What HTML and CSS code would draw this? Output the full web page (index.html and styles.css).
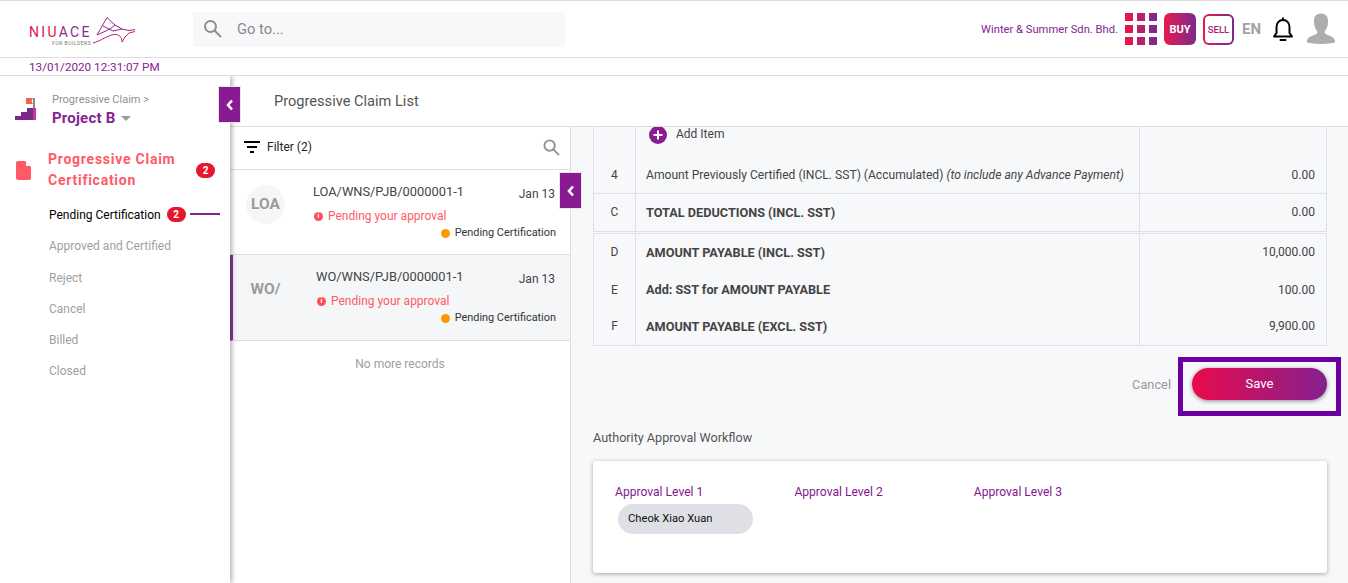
FILE: index.html
```html
<!DOCTYPE html>
<html lang="en">
<head>
<meta charset="UTF-8">
<title>Progressive Claim List</title>
<link rel="stylesheet" href="styles.css">
</head>
<body>
<header class="topbar">
    <div class="logo">
        <svg width="46" height="30" viewBox="92 16 46 30" fill="none">
            <path d="M97 35 L107 17.500 L115 25 L122 29 L129 30.500 L135 29.500 M97 35 L110 29 L115 25 M103 26 L109 29 L113 31 L122 29" stroke="#8d2a8b" stroke-width="1"/>
            <path d="M93 43 C101 41 108 35 114 34.500 C119 34 122 37 122 42 L125 37 L129 33 L135 31.500" stroke="#c81f63" stroke-width="1"/>
        </svg>
        <span class="logo-text"><span class="logo-red">NIU</span>ACE</span>
        <span class="logo-sub">FOR BUILDERS</span>
    </div>
    <div class="goto">
        <svg class="search-icon" width="20" height="20" viewBox="0 0 20 20" fill="none" stroke="#8f8f8f" stroke-width="2">
            <circle cx="7.5" cy="7.5" r="5.5"/>
            <path d="M11.5 11.5 L17.5 17.5" stroke-linecap="round"/>
        </svg>
        <span>Go to...</span>
    </div>
    <div class="top-right">
        <span class="company">Winter &amp; Summer Sdn. Bhd.</span>
        <div class="apps">
            <i class="a1"></i><i class="a2"></i><i class="a3"></i>
            <i class="a1"></i><i class="a2"></i><i class="a3"></i>
            <i class="a1"></i><i class="a2"></i><i class="a3"></i>
        </div>
        <span class="buy">BUY</span>
        <span class="sell"><span>SELL</span></span>
        <span class="lang">EN</span>
        <svg class="bell" width="22" height="25" viewBox="0 0 22 25" fill="none" stroke="#000" stroke-width="2">
            <path d="M2 19.500 H20 L17.500 16 V10.500 C17.500 6 15 3 11 3 C7 3 4.500 6 4.500 10.500 V16 Z" stroke-linejoin="round"/>
            <path d="M11 0.500 V3"/>
            <path d="M8.500 23 H13.500" stroke-linecap="round"/>
        </svg>
        <svg class="avatar" width="28" height="32" viewBox="0 0 30 33">
            <path d="M15 0 C20.500 0 23 4 22.500 9 C22.500 14 20.500 17 19 19 V21 C23 24 29 24 30 29 V31 C24 33 6 33 0 31 V29 C1 24 7 24 11 21 V19 C9.500 17 7.500 14 7.500 9 C7 4 9.500 0 15 0 Z" fill="#adadad"/>
        </svg>
    </div>
</header>
<div class="datebar">13/01/2020 12:31:07 PM</div>

<div class="main">
    <aside class="sidebar">
        <div class="project">
            <svg class="stairs" width="22" height="23" viewBox="0 0 22 23">
                <path d="M11 0 H18 L16.500 3 L18 6 H11 Z" fill="#f0644a"/>
                <rect x="18" y="0" width="2" height="10" fill="#8a8a8a"/>
                <path d="M0 22 V18 H6 V14 H12 V10 H18 V22 Z" fill="#7b2a87"/>
                <rect x="18" y="10" width="3" height="12" fill="#c2379a"/>
            </svg>
            <div>
                <div class="crumb">Progressive Claim &gt;</div>
                <div class="project-name">Project B <i class="caret"></i></div>
            </div>
        </div>
        <div class="menu-head">
            <svg width="15" height="19" viewBox="0 0 15 19">
                <path d="M2 0 H9 L15 6 V17 A2 2 0 0 1 13 19 H2 A2 2 0 0 1 0 17 V2 A2 2 0 0 1 2 0 Z" fill="#ff5a67"/>
                <path d="M10 1 L14 5 H10 Z" fill="#fff"/>
            </svg>
            <div class="menu-title">Progressive Claim Certification</div>
            <span class="badge">2</span>
        </div>
        <ul class="submenu">
            <li class="active">Pending Certification <span class="badge">2</span><i class="dash"></i></li>
            <li>Approved and Certified</li>
            <li>Reject</li>
            <li>Cancel</li>
            <li>Billed</li>
            <li>Closed</li>
        </ul>
        <button class="toggle toggle-side"><svg width="8" height="12" viewBox="0 0 8 12"><path d="M6 1.500 L2 6 L6 10.500" fill="none" stroke="#fff" stroke-width="2.600"/></svg></button>
    </aside>

    <div class="content">
        <div class="title-bar">Progressive Claim List</div>
        <div class="panes">
            <section class="list">
                <div class="filter">
                    <svg width="16" height="12" viewBox="0 0 16 12" fill="#000">
                        <rect x="0" y="0" width="16" height="2"/>
                        <rect x="3" y="5" width="10" height="2"/>
                        <rect x="6" y="10" width="4" height="2"/>
                    </svg>
                    <span>Filter (2)</span>
                    <svg class="filter-search" width="17" height="17" viewBox="0 0 18 18" fill="none" stroke="#929292" stroke-width="2">
                        <circle cx="7" cy="7" r="5.500"/>
                        <path d="M11 11 L16.500 16.500" stroke-linecap="round"/>
                    </svg>
                </div>
                <article class="claim">
                    <div class="claim-avatar circle">LOA</div>
                    <div class="claim-body">
                        <div class="claim-top"><span class="claim-no">LOA/WNS/PJB/0000001-1</span><span class="claim-date">Jan 13</span></div>
                        <div class="claim-alert"><i class="info">i</i>Pending your approval</div>
                    </div>
                    <div class="claim-status"><i class="dot"></i>Pending Certification</div>
                </article>
                <article class="claim selected">
                    <div class="claim-avatar">WO/</div>
                    <div class="claim-body">
                        <div class="claim-top"><span class="claim-no">WO/WNS/PJB/0000001-1</span><span class="claim-date">Jan 13</span></div>
                        <div class="claim-alert"><i class="info">i</i>Pending your approval</div>
                    </div>
                    <div class="claim-status"><i class="dot"></i>Pending Certification</div>
                </article>
                <div class="no-more">No more records</div>
                <button class="toggle toggle-list"><svg width="8" height="12" viewBox="0 0 8 12"><path d="M6 1.500 L2 6 L6 10.500" fill="none" stroke="#fff" stroke-width="2.600"/></svg></button>
            </section>

            <section class="detail">
                <table class="summary">
                    <colgroup><col class="c1"><col class="c2"><col class="c3"></colgroup>
                    <tr class="row-add">
                        <td></td>
                        <td>
                            <div class="add-item">
                                <svg width="18" height="18" viewBox="0 0 18 18">
                                    <circle cx="9" cy="9" r="9" fill="#8a1c92"/>
                                    <path d="M9 4.500 V13.500 M4.500 9 H13.500" stroke="#fff" stroke-width="2"/>
                                </svg>
                                <span>Add Item</span>
                            </div>
                            <div class="accum">Amount Previously Certified (INCL. SST) (Accumulated) <em>(to include any Advance Payment)</em></div>
                        </td>
                        <td class="num"><span class="accum-num">0.00</span></td>
                    </tr>
                    <tr class="row-c">
                        <td class="letter">C</td>
                        <td><b>TOTAL DEDUCTIONS (INCL. SST)</b></td>
                        <td class="num">0.00</td>
                    </tr>
                    <tr class="row-p row-d">
                        <td class="letter">D</td>
                        <td><b>AMOUNT PAYABLE (INCL. SST)</b></td>
                        <td class="num">10,000.00</td>
                    </tr>
                    <tr class="row-p">
                        <td class="letter">E</td>
                        <td><b>Add: SST for AMOUNT PAYABLE</b></td>
                        <td class="num">100.00</td>
                    </tr>
                    <tr class="row-p">
                        <td class="letter">F</td>
                        <td><b>AMOUNT PAYABLE (EXCL. SST)</b></td>
                        <td class="num">9,900.00</td>
                    </tr>
                </table>
                <span class="row-four">4</span>

                <div class="actions">
                    <span class="cancel">Cancel</span>
                    <div class="save-box"><button class="save">Save</button></div>
                </div>

                <h2 class="wf-title">Authority Approval Workflow</h2>
                <div class="wf-card">
                    <div class="wf-level">
                        <div class="wf-label">Approval Level 1</div>
                        <div class="chip">Cheok Xiao Xuan</div>
                    </div>
                    <div class="wf-level"><div class="wf-label">Approval Level 2</div></div>
                    <div class="wf-level"><div class="wf-label">Approval Level 3</div></div>
                </div>
            </section>
        </div>
    </div>
</div>
</body>
</html>
```

FILE: styles.css
```css
* {
    box-sizing: border-box;
}
html, body {
    margin: 0;
    height: 583px;
    overflow: hidden;
}
body {
    background: #fff;
    font-family: Roboto, "Liberation Sans", sans-serif;
    font-size: 12px;
    color: #444;
}
i {
    font-style: normal;
}

/* top */
.topbar {
    height: 58px;
    border-top: 1px solid #ddd;
    border-bottom: 1px solid #ddd;
    display: flex;
    align-items: center;
}
.logo {
    position: relative;
    width: 193px;
    height: 56px;
    flex: none;
}
.logo svg {
    position: absolute;
    left: 92px;
    top: 15px;
}
.logo-text {
    position: absolute;
    left: 29px;
    top: 25px;
    font-size: 14px;
    line-height: 12px;
    letter-spacing: 2.300px;
    color: #8d2a8b;
}
.logo-red {
    color: #e0144f;
}
.logo-sub {
    position: absolute;
    left: 52px;
    top: 40px;
    font-size: 5px;
    line-height: 5px;
    letter-spacing: 0.5px;
    color: #777;
}
.goto {
    width: 372px;
    height: 35px;
    background: #f7f8fa;
    display: flex;
    align-items: center;
    padding-left: 10px;
    gap: 14px;
    font-size: 14.700px;
    color: #8a8a8a;
}
.top-right {
    margin-left: auto;
    display: flex;
    align-items: center;
    padding-right: 13px;
}
.company {
    font-size: 11.200px;
    color: #84248f;
    margin-right: 7px;
}
.apps {
    display: grid;
    grid-template-columns: repeat(3, 8px);
    grid-auto-rows: 8px;
    gap: 4px;
    margin-right: 7px;
}
.apps .a1 { background: #e5164d; }
.apps .a2 { background: #b82068; }
.apps .a3 { background: #84288a; }
.buy {
    width: 32px;
    height: 32px;
    border-radius: 6px;
    background: linear-gradient(90deg, #e91a4c, #7b2a8c);
    color: #fff;
    font-size: 11px;
    font-weight: 700;
    display: flex;
    align-items: center;
    justify-content: center;
    margin-right: 7px;
}
.sell {
    width: 31px;
    height: 31px;
    border-radius: 6px;
    padding: 2px;
    background: linear-gradient(90deg, #e91a4c, #7b2a8c);
    margin-right: 8px;
}
.sell span {
    display: flex;
    width: 100%;
    height: 100%;
    border-radius: 4px;
    background: #fff;
    color: #a8246f;
    font-size: 9.500px;
    font-weight: 500;
    align-items: center;
    justify-content: center;
}
.lang {
    font-size: 15px;
    font-weight: 700;
    color: #a3a3a3;
    margin-right: 11px;
}
.bell {
    margin-right: 13px;
}
.datebar {
    height: 18px;
    border-bottom: 1px solid #ddd;
    padding-left: 29px;
    font-size: 11.700px;
    line-height: 19px;
    color: #84248f;
}

/* layout */
.main {
    display: flex;
    height: 507px;
    overflow: hidden;
}
.sidebar {
    position: relative;
    width: 230px;
    flex: none;
    background: #fff;
    box-shadow: 2px 0 5px rgba(0, 0, 0, 0.3);
    z-index: 2;
}
.content {
    flex: 1;
    min-width: 0;
}
.title-bar {
    height: 51px;
    border-bottom: 1px solid #ddd;
    padding: 16px 0 0 44px;
    font-size: 14.600px;
    color: #555;
}
.panes {
    display: flex;
    height: 456px;
}

/* sidebar */
.project {
    display: flex;
    gap: 15px;
    padding: 17px 0 0 15px;
    height: 73px;
}
.stairs {
    margin-top: 5px;
}
.crumb {
    font-size: 11px;
    line-height: 14px;
    color: #8f8f8f;
}
.project-name {
    font-size: 15px;
    font-weight: 700;
    line-height: 20px;
    margin-top: 1px;
    letter-spacing: 0.2px;
    color: #84248f;
    display: flex;
    align-items: center;
    gap: 6px;
}
.caret {
    width: 0;
    height: 0;
    border: 5px solid transparent;
    border-top: 5px solid #9a9a9a;
    border-bottom: 0;
}
.menu-head {
    display: flex;
    align-items: center;
    padding-left: 16px;
    height: 42px;
}
.menu-title {
    width: 132px;
    margin-left: 17px;
    font-size: 14px;
    font-weight: 700;
    line-height: 21px;
    letter-spacing: 0.750px;
    color: #ff5a67;
}
.badge {
    display: inline-block;
    width: 19px;
    height: 15px;
    border-radius: 8px;
    background: #e5162d;
    color: #fff;
    font-size: 10px;
    font-weight: 700;
    line-height: 15px;
    text-align: center;
}
.menu-head .badge {
    margin-left: 16px;
}
.submenu {
    list-style: none;
    margin: 16px 0 0;
    padding: 0 0 0 49px;
}
.submenu li {
    height: 31.300px;
    line-height: 16px;
    font-size: 12px;
    color: #a0a0a0;
}
.submenu li.active {
    color: #000;
    display: flex;
    align-items: flex-start;
    gap: 6px;
}
.dash {
    width: 30px;
    height: 2px;
    background: #84248f;
    margin: 6px 0 0 -2px;
}
.toggle {
    position: absolute;
    width: 21px;
    height: 35px;
    padding: 0;
    border: 0;
    background: #881a92;
    display: flex;
    align-items: center;
    justify-content: center;
}
.toggle-side {
    left: 219px;
    top: 11px;
    outline: 1px solid #e6e6e6;
}
.toggle-list {
    left: 330px;
    top: 46px;
    outline: 1px solid #e6e6e6;
    z-index: 2;
}

/* list */
.list {
    position: relative;
    width: 341px;
    flex: none;
    background: #fff;
    border-right: 1px solid #ddd;
}
.filter {
    height: 43px;
    display: flex;
    align-items: center;
    gap: 7px;
    padding: 0 10px 2px 14px;
    font-size: 12px;
    color: #222;
    border-bottom: 1px solid #ddd;
}
.filter-search {
    margin-left: auto;
}
.claim {
    position: relative;
    height: 85px;
    border-bottom: 1px solid #ddd;
    display: flex;
    padding-left: 16px;
}
.claim.selected {
    height: 86px;
    background: #f5f6f8;
    border-left: 3px solid #8f3a98;
    padding-left: 13px;
}
.claim-avatar {
    width: 39px;
    height: 39px;
    margin-top: 15px;
    font-size: 15.500px;
    font-weight: 700;
    line-height: 39px;
    text-align: center;
    color: #9b9b9b;
    flex: none;
}
.claim-avatar.circle {
    background: #f5f6f8;
    border-radius: 50%;
}
.claim-body {
    flex: 1;
    padding: 14px 15px 0 28px;
    min-width: 0;
}
.selected .claim-body {
    padding-left: 31px;
}
.claim-top {
    display: flex;
    justify-content: space-between;
    font-size: 12px;
    color: #444;
}
.claim-no {
    font-size: 12.850px;
    line-height: 16px;
}
.claim-date {
    line-height: 16px;
    margin-top: 2px;
}
.claim-alert {
    margin-top: 6px;
    display: flex;
    align-items: center;
    gap: 5px;
    font-size: 12px;
    line-height: 16px;
    color: #ff5a67;
}
.info {
    width: 9px;
    height: 9px;
    margin-left: 1px;
    border-radius: 50%;
    background: #ff4d5c;
    color: #fff;
    font-size: 7px;
    font-weight: 700;
    line-height: 9px;
    text-align: center;
}
.claim-status {
    position: absolute;
    right: 14px;
    bottom: 14px;
    display: flex;
    align-items: center;
    gap: 5px;
    font-size: 10.900px;
    line-height: 14px;
    color: #333;
}
.selected .claim-status {
    bottom: 15px;
}
.no-more {
    margin-top: 15px;
    text-align: center;
    font-size: 12px;
    line-height: 16px;
    color: #a0a0a0;
}
.dot {
    width: 9px;
    height: 9px;
    border-radius: 50%;
    background: #ff9800;
}

/* detail */
.detail {
    position: relative;
    flex: 1;
    min-width: 0;
    background: #f7f8fa;
    padding: 0 21px 0 22px;
    overflow: hidden;
}
.summary {
    width: 734px;
    border-collapse: collapse;
    table-layout: fixed;
    font-size: 12px;
    color: #444;
    border-left: 1px solid #dfe1e6;
    border-right: 1px solid #dfe1e6;
    border-bottom: 1px solid #dfe1e6;
}
.c1 { width: 42px; }
.c3 { width: 187px; }
.summary td {
    padding: 0 11px 0 10px;
    border-right: 1px solid #dfe1e6;
}
.summary b {
    font-size: 12.700px;
    font-weight: 700;
    color: #444;
}
.summary td.letter {
    padding: 0;
    text-align: center;
}
.num {
    text-align: right;
    font-size: 12px;
}
.row-add td {
    height: 66px;
    vertical-align: top;
    border-bottom: 1px solid #dfe1e6;
}
.add-item {
    display: flex;
    gap: 9px;
    padding-left: 3px;
    height: 40px;
    line-height: 14px;
    align-items: flex-start;
}
.add-item svg {
    margin-top: -1px;
}
.add-item span {
    color: #444;
}
.accum {
    font-size: 12.100px;
    line-height: 16px;
    white-space: nowrap;
}
.accum-num {
    display: block;
    margin-top: 40px;
    line-height: 16px;
}
.row-four {
    position: absolute;
    left: 40px;
    top: 40px;
    font-size: 12px;
    line-height: 16px;
}
.row-c td {
    height: 39px;
}
.row-p td {
    height: 37px;
}
.row-d td {
    height: 39px;
    border-top: 3px double #dfe1e6;
}
.actions {
    display: flex;
    justify-content: flex-end;
    align-items: center;
    margin-top: 11px;
    width: 748px;
    gap: 7px;
}
.cancel {
    font-size: 12.800px;
    color: #999;
    margin-bottom: 3px;
}
.save-box {
    border: 5px solid #6a00a3;
    padding: 6px 9px;
    width: 163px;
    height: 59px;
}
.save {
    display: block;
    width: 135px;
    height: 32px;
    border: 0;
    border-radius: 16px;
    background: linear-gradient(90deg, #ea0a4c, #84208f);
    box-shadow: 0 1px 4px rgba(0, 0, 0, 0.45);
    color: #fff;
    font-family: Roboto, "Liberation Sans", sans-serif;
    font-size: 13px;
    font-weight: 400;
    padding: 0;
}
.wf-title {
    margin: 14px 0 0;
    font-size: 12.600px;
    font-weight: 400;
    line-height: 16px;
    color: #555;
}
.wf-card {
    margin-top: 15px;
    width: 734px;
    height: 112px;
    background: #fff;
    border-radius: 3px;
    box-shadow: 0 1px 4px rgba(0, 0, 0, 0.35);
    display: flex;
    padding: 24px 0 0 22px;
}
.wf-level {
    width: 179.400px;
}
.wf-label {
    font-size: 12.100px;
    line-height: 15px;
    color: #84188f;
}
.chip {
    width: 135px;
    height: 30px;
    margin: 4px 0 0 3px;
    border-radius: 15px;
    background: #dee0e5;
    padding-left: 10px;
    font-size: 11.200px;
    line-height: 30px;
    color: #111;
}
```
